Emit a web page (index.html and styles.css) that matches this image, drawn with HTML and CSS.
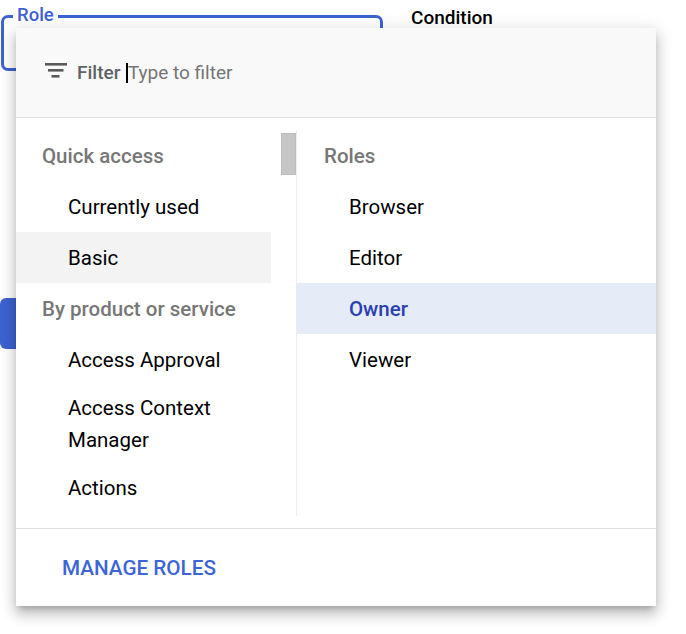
FILE: index.html
```html
<!DOCTYPE html>
<html lang="en">
<head>
<meta charset="utf-8">
<title>Role picker</title>
<link rel="stylesheet" href="styles.css">
</head>
<body>
<div class="page">
  <div class="form-row">
    <div class="role-field"><span class="role-label">Role</span></div>
    <div class="condition">Condition</div>
  </div>
  <div class="save-btn"></div>

  <div class="menu">
    <div class="menu-header">
      <svg class="filter-icon" width="22" height="15" viewBox="0 0 22 15" aria-hidden="true">
        <rect x="0" y="0" width="22" height="2.6" fill="#5a5a5a"/>
        <rect x="3" y="6" width="15.5" height="2.6" fill="#5a5a5a"/>
        <rect x="6.5" y="12" width="8" height="2.6" fill="#5a5a5a"/>
      </svg>
      <span class="filter-label">Filter</span>
      <span class="caret"></span>
      <span class="placeholder">Type to filter</span>
    </div>
    <div class="menu-body">
      <div class="col-left">
        <div class="list">
          <div class="heading">Quick access</div>
          <div class="item">Currently used</div>
          <div class="item item-hover">Basic</div>
          <div class="heading">By product or service</div>
          <div class="item">Access Approval</div>
          <div class="item">Access Context<br>Manager</div>
          <div class="item">Actions</div>
        </div>
        <div class="scroll-track"><div class="scroll-thumb"></div></div>
      </div>
      <div class="col-right">
        <div class="heading heading-right">Roles</div>
        <div class="item item-right">Browser</div>
        <div class="item item-right">Editor</div>
        <div class="item item-right item-selected">Owner</div>
        <div class="item item-right">Viewer</div>
      </div>
    </div>
    <div class="menu-footer">
      <span class="manage">MANAGE ROLES</span>
    </div>
  </div>
</div>
</body>
</html>
```

FILE: styles.css
```css
* { box-sizing: border-box; }

html, body {
  margin: 0;
  padding: 0;
  background: #ffffff;
  font-family: Roboto, "Liberation Sans", Arial, sans-serif;
}

.page {
  position: relative;
  width: 686px;
  height: 634px;
  overflow: hidden;
}

.form-row {
  display: flex;
  align-items: flex-start;
}

.role-field {
  position: relative;
  margin-left: 1px;
  margin-top: 15px;
  width: 382px;
  height: 56px;
  border: 3px solid #3d63d2;
  border-radius: 7px;
}

.role-label {
  position: absolute;
  top: -14px;
  left: 9px;
  padding: 0 4px;
  background: #ffffff;
  color: #3d63d2;
  font-size: 18.5px;
  line-height: 22px;
  font-weight: 500;
}

.condition {
  margin-left: 28px;
  margin-top: 7px;
  font-size: 19px;
  line-height: 22px;
  font-weight: 500;
  color: #000000;
}

.save-btn {
  margin-top: 227px;
  width: 100px;
  height: 51px;
  background: #3d63d2;
  border-radius: 6px;
}

.menu {
  position: absolute;
  left: 16px;
  top: 28px;
  width: 640px;
  background: #ffffff;
  box-shadow: 0 5px 6px -3px rgba(0,0,0,0.22),
              0 9px 12px 1px rgba(0,0,0,0.15),
              0 3px 16px 2px rgba(0,0,0,0.12);
}

.menu-header {
  height: 90px;
  background: #f9f9f9;
  border-bottom: 1px solid #e0e0e0;
  display: flex;
  align-items: center;
  padding-left: 29px;
  font-size: 19px;
}

.filter-icon {
  flex: none;
  margin-top: -5px;
  margin-right: 10px;
}

.filter-label {
  color: #5f6368;
  font-weight: 500;
  margin-right: 6px;
}

.caret {
  display: inline-block;
  width: 1.5px;
  height: 20px;
  background: #000000;
}

.placeholder {
  color: #757575;
}

.menu-body {
  display: flex;
  padding: 12px 0;
  height: 410px;
}

.col-left {
  width: 281px;
  display: flex;
  border-right: 1.5px solid #ececec;
}

.list {
  width: 255px;
  overflow: hidden;
}

.scroll-track {
  margin-left: 10px;
  width: 15px;
  padding-top: 3px;
}

.scroll-thumb {
  height: 42px;
  background: #c6c6c6;
  border: 1px solid #bdbdbd;
}

.col-right {
  flex: 1;
}

.heading {
  height: 51px;
  display: flex;
  align-items: center;
  padding-left: 26px;
  font-size: 20.5px;
  font-weight: 500;
  color: #777777;
}

.heading-right {
  padding-left: 27px;
}

.item {
  min-height: 51px;
  display: flex;
  align-items: center;
  padding: 6.5px 0 6.5px 52px;
  font-size: 20.5px;
  line-height: 32px;
  color: #000000;
}

.item-hover {
  background: #f3f3f3;
}

.item-right {
  padding-left: 52px;
}

.item-selected {
  background: #e5ebf7;
  color: #2a40b0;
  font-weight: 500;
}

.menu-footer {
  height: 78px;
  border-top: 1px solid #e0e0e0;
  display: flex;
  align-items: center;
  padding-left: 46px;
}

.manage {
  font-size: 20.7px;
  font-weight: 500;
  color: #3c66d6;
}
```
